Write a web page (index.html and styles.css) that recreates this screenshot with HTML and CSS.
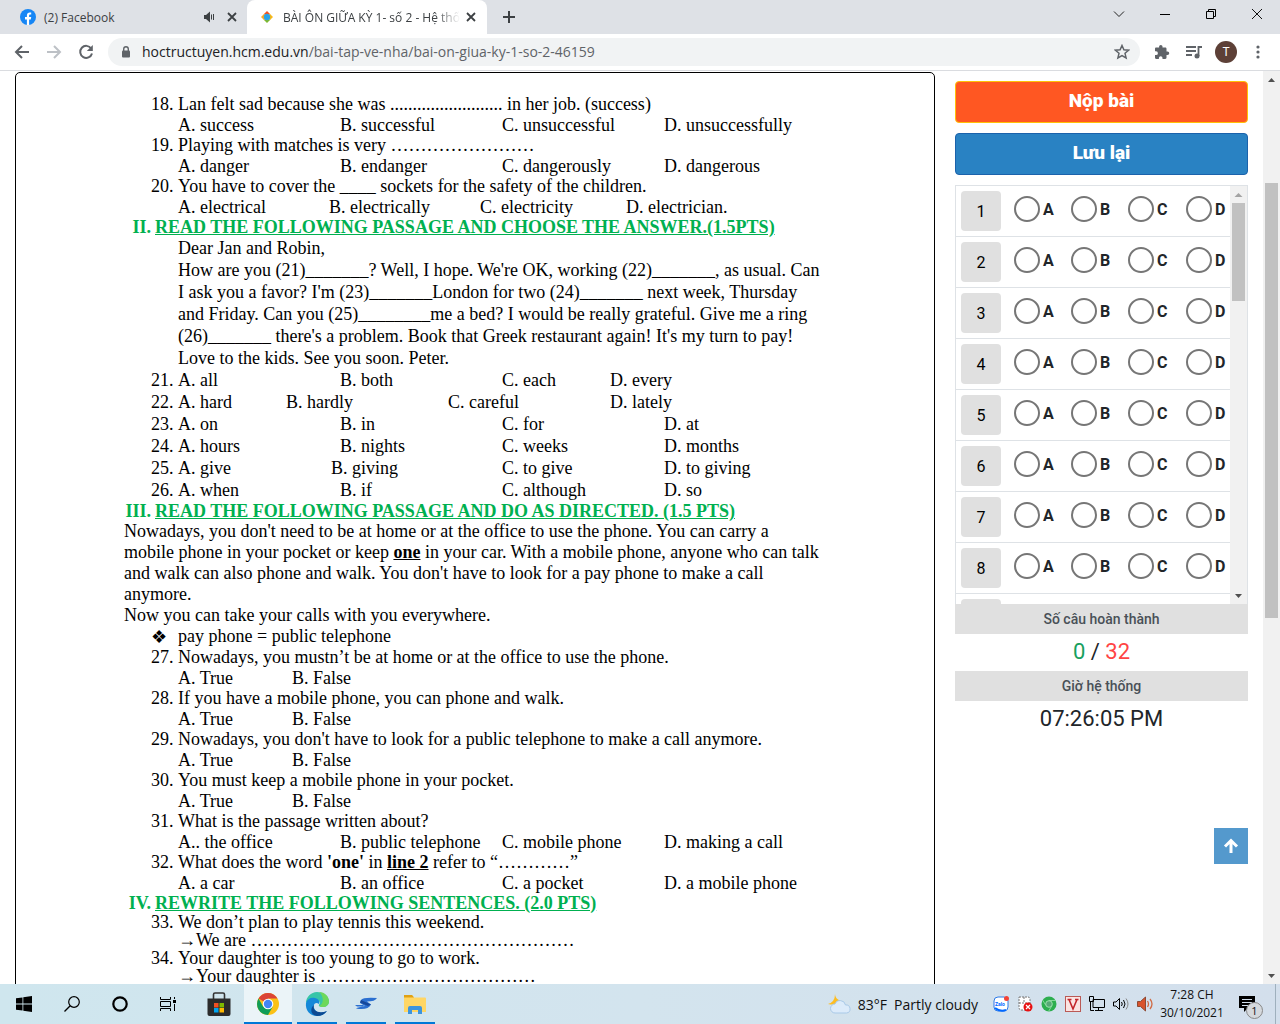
FILE: index.html
```html
<!DOCTYPE html>
<html lang="vi">
<head>
<meta charset="utf-8">
<title>BÀI ÔN GIỮA KỲ 1- số 2</title>
<link rel="stylesheet" href="styles.css">
</head>
<body>
<div class="screen">
  <header class="tabstrip">
    <div class="tab tab-idle">
      <svg class="favicon" viewBox="0 0 16 16"><circle cx="8" cy="8" r="8" fill="#1686f5"/><path d="M6.9 16v-5.6H5V8.1h1.9V6.5c0-2 1.1-3 2.9-3 .8 0 1.4.1 1.4.1v2h-.9c-.9 0-1.200.5-1.200 1.100v1.400h2.100l-.4 2.300H9.100V16z" fill="#fff"/></svg>
      <span class="tab-title">(2) Facebook</span>
      <svg class="tab-sound" viewBox="0 0 12 12"><path d="M1 4h2l4-3.500v11L3 8H1z" fill="#3c4043"/><path d="M8.500 3.500v5M10.500 3v6" stroke="#3c4043" fill="none"/></svg>
      <button class="tab-close" aria-label="Close tab"><svg viewBox="0 0 10 10"><path d="M1 1l8 8M9 1L1 9" stroke="#3c4043" stroke-width="1.800"/></svg></button>
    </div>
    <div class="tab tab-active">
      <svg class="favicon favicon-small" viewBox="0 0 12 12"><path d="M6 0l3.500 3.500H2.500z" fill="#f4511e"/><path d="M12 6L8.500 9.500v-7z" fill="#f9b817"/><path d="M6 12L2.500 8.500h7z" fill="#7cb82f"/><path d="M0 6l3.500-3.500v7z" fill="#f9a825"/><circle cx="6" cy="6" r="3.200" fill="#29a3e8"/></svg>
      <span class="tab-title tab-fade">BÀI ÔN GIỮA KỲ 1- số 2 - Hệ thố</span>
      <button class="tab-close" aria-label="Close tab"><svg viewBox="0 0 10 10"><path d="M1 1l8 8M9 1L1 9" stroke="#3c4043" stroke-width="1.800"/></svg></button>
    </div>
    <button class="new-tab" aria-label="New tab"><svg viewBox="0 0 12 12"><path d="M6 0v12M0 6h12" stroke="#3c4043" stroke-width="2"/></svg></button>
    <div class="window-buttons">
      <button aria-label="Search tabs"><svg viewBox="0 0 12 12"><path d="M1 3.500l5 5 5-5" fill="none" stroke="#222"/></svg></button>
      <button aria-label="Minimize"><svg viewBox="0 0 12 12"><path d="M1 6.500h10" stroke="#000"/></svg></button>
      <button aria-label="Restore"><svg viewBox="0 0 12 12"><path d="M1.500 3.500h7v7h-7zM3.500 3.500v-2h7v7h-2" fill="none" stroke="#000"/></svg></button>
      <button aria-label="Close"><svg viewBox="0 0 12 12"><path d="M1 1l10 10M11 1L1 11" stroke="#111"/></svg></button>
    </div>
  </header>
  <div class="toolbar">
    <button class="nav" aria-label="Back"><svg viewBox="0 0 16 16"><path d="M15 8H2M8 2L2 8l6 6" fill="none" stroke="#5f6368" stroke-width="2"/></svg></button>
    <button class="nav" aria-label="Forward"><svg viewBox="0 0 16 16"><path d="M1 8h13M8 2l6 6-6 6" fill="none" stroke="#bdc1c6" stroke-width="2"/></svg></button>
    <button class="nav" aria-label="Reload"><svg viewBox="0 0 16 16"><path d="M13.200 4.500A6 6 0 1 0 14 9.500" fill="none" stroke="#5f6368" stroke-width="2"/><path d="M14.800 1v6h-6z" fill="#5f6368"/></svg></button>
    <div class="address">
      <svg class="lock" viewBox="0 0 10 12"><rect x="1" y="4.500" width="8" height="7" rx="1" fill="#5f6368"/><path d="M2.700 5V3a2.300 2.300 0 0 1 4.600 0v2" fill="none" stroke="#5f6368" stroke-width="1.400"/></svg>
      <span class="url"><b>hoctructuyen.hcm.edu.vn</b>/bai-tap-ve-nha/bai-on-giua-ky-1-so-2-46159</span>
      <svg class="star" viewBox="0 0 16 16"><path d="M8 1.500l1.900 4.300 4.700.4-3.600 3.100 1.100 4.600L8 11.500l-4.100 2.400L5 9.300 1.400 6.200l4.700-.4z" fill="none" stroke="#5f6368" stroke-width="1.500"/></svg>
    </div>
    <svg class="ext" viewBox="0 0 16 16"><path d="M13.500 7.500h-1V4.700c0-.8-.6-1.200-1.200-1.200H8.500V2.600a1.700 1.700 0 0 0-3.400 0v.9H2.200C1.500 3.500 1 4 1 4.700v2.600h1a1.900 1.900 0 0 1 0 3.800H1v2.700c0 .7.5 1.200 1.200 1.200h2.700v-1a1.800 1.800 0 0 1 3.600 0v1h2.800c.6 0 1.200-.5 1.200-1.200V11h1a1.750 1.750 0 0 0 0-3.500z" fill="#5f6368"/></svg>
    <svg class="media" viewBox="0 0 16 16"><path d="M0 3h10M0 7h10M0 11h6M12.500 12V3H16" fill="none" stroke="#5f6368" stroke-width="1.800"/><circle cx="11" cy="12" r="2.500" fill="#5f6368"/></svg>
    <span class="avatar">T</span>
    <svg class="menu" viewBox="0 0 4 14"><circle cx="2" cy="2" r="1.600" fill="#5f6368"/><circle cx="2" cy="7" r="1.600" fill="#5f6368"/><circle cx="2" cy="12" r="1.600" fill="#5f6368"/></svg>
  </div>

  <div class="viewport">
    <main class="page">
      <article class="paper">
        <section class="block">
          <div class="item"><span>18.</span><p>Lan felt sad because she was ......................... in her job. (success)</p></div>
          <div class="options"><span>A. success</span><span>B. successful</span><span>C. unsuccessful</span><span>D. unsuccessfully</span></div>
          <div class="item"><span>19.</span><p>Playing with matches is very ……………………</p></div>
          <div class="options"><span>A. danger</span><span>B. endanger</span><span>C. dangerously</span><span>D. dangerous</span></div>
          <div class="item"><span>20.</span><p>You have to cover the ____ sockets for the safety of the children.</p></div>
          <div class="options tight"><span>A. electrical</span><span>B. electrically</span><span>C. electricity</span><span>D. electrician.</span></div>
        </section>
        <h2><span>II.</span><u>READ THE FOLLOWING PASSAGE AND CHOOSE THE ANSWER.(1.5PTS)</u></h2>
        <section class="block roomy">
          <p class="letter">Dear Jan and Robin,<br>How are you (21)_______? Well, I hope. We're OK, working (22)_______, as usual. Can<br>I ask you a favor? I'm (23)_______London for two (24)_______ next week, Thursday<br>and Friday. Can you (25)________me a bed? I would be really grateful. Give me a ring<br>(26)_______ there's a problem. Book that Greek restaurant again! It's my turn to pay!<br>Love to the kids. See you soon. Peter.</p>
          <div class="item"><span>21.</span><div class="choices near-d"><span>A. all</span><span>B. both</span><span>C. each</span><span>D. every</span></div></div>
          <div class="item"><span>22.</span><div class="choices near-b"><span>A. hard</span><span>B. hardly</span><span>C. careful</span><span>D. lately</span></div></div>
          <div class="item"><span>23.</span><div class="choices"><span>A. on</span><span>B. in</span><span>C. for</span><span>D. at</span></div></div>
          <div class="item"><span>24.</span><div class="choices"><span>A. hours</span><span>B. nights</span><span>C. weeks</span><span>D. months</span></div></div>
          <div class="item"><span>25.</span><div class="choices early-b"><span>A. give</span><span>B. giving</span><span>C. to give</span><span>D. to giving</span></div></div>
          <div class="item"><span>26.</span><div class="choices"><span>A. when</span><span>B. if</span><span>C. although</span><span>D. so</span></div></div>
        </section>
        <h2><span>III.</span><u>READ THE FOLLOWING PASSAGE AND DO AS DIRECTED. (1.5 PTS)</u></h2>
        <section class="block">
          <p class="passage">Nowadays, you don't need to be at home or at the office to use the phone. You can carry a<br>mobile phone in your pocket or keep <b><u>one</u></b> in your car. With a mobile phone, anyone who can talk<br>and walk can also phone and walk. You don't have to look for a pay phone to make a call<br>anymore.<br>Now you can take your calls with you everywhere.</p>
          <div class="item"><span class="bullet">❖</span><p>pay phone = public telephone</p></div>
          <div class="item"><span>27.</span><p>Nowadays, you mustn’t be at home or at the office to use the phone.</p></div>
          <div class="options pair"><span>A. True</span><span>B. False</span></div>
          <div class="item"><span>28.</span><p>If you have a mobile phone, you can phone and walk.</p></div>
          <div class="options pair"><span>A. True</span><span>B. False</span></div>
          <div class="item"><span>29.</span><p>Nowadays, you don't have to look for a public telephone to make a call anymore.</p></div>
          <div class="options pair"><span>A. True</span><span>B. False</span></div>
          <div class="item"><span>30.</span><p>You must keep a mobile phone in your pocket.</p></div>
          <div class="options pair"><span>A. True</span><span>B. False</span></div>
          <div class="item"><span>31.</span><p>What is the passage written about?</p></div>
          <div class="options"><span>A.. the office</span><span>B. public telephone</span><span>C. mobile phone</span><span>D. making a call</span></div>
          <div class="item"><span>32.</span><p>What does the word <b>'one'</b> in <b><u>line 2</u></b> refer to “…………”</p></div>
          <div class="options"><span>A. a car</span><span>B. an office</span><span>C. a pocket</span><span>D. a mobile phone</span></div>
        </section>
        <h2><span>IV.</span><u>REWRITE THE FOLLOWING SENTENCES. (2.0 PTS)</u></h2>
        <section class="block dense">
          <div class="item"><span>33.</span><p>We don’t plan to play tennis this weekend.<br><span class="arrow">→</span>We are ………………………………………………</p></div>
          <div class="item"><span>34.</span><p>Your daughter is too young to go to work.<br><span class="arrow">→</span>Your daughter is ………………………………</p></div>
        </section>
      </article>

      <aside class="panel">
        <button class="action submit">Nộp bài</button>
        <button class="action save">Lưu lại</button>
        <div class="answers">
          <div class="answer-list">
            <div class="row"><button>1</button><label><input type="radio" name="q1">A</label><label><input type="radio" name="q1">B</label><label><input type="radio" name="q1">C</label><label><input type="radio" name="q1">D</label></div>
            <div class="row"><button>2</button><label><input type="radio" name="q2">A</label><label><input type="radio" name="q2">B</label><label><input type="radio" name="q2">C</label><label><input type="radio" name="q2">D</label></div>
            <div class="row"><button>3</button><label><input type="radio" name="q3">A</label><label><input type="radio" name="q3">B</label><label><input type="radio" name="q3">C</label><label><input type="radio" name="q3">D</label></div>
            <div class="row"><button>4</button><label><input type="radio" name="q4">A</label><label><input type="radio" name="q4">B</label><label><input type="radio" name="q4">C</label><label><input type="radio" name="q4">D</label></div>
            <div class="row"><button>5</button><label><input type="radio" name="q5">A</label><label><input type="radio" name="q5">B</label><label><input type="radio" name="q5">C</label><label><input type="radio" name="q5">D</label></div>
            <div class="row"><button>6</button><label><input type="radio" name="q6">A</label><label><input type="radio" name="q6">B</label><label><input type="radio" name="q6">C</label><label><input type="radio" name="q6">D</label></div>
            <div class="row"><button>7</button><label><input type="radio" name="q7">A</label><label><input type="radio" name="q7">B</label><label><input type="radio" name="q7">C</label><label><input type="radio" name="q7">D</label></div>
            <div class="row"><button>8</button><label><input type="radio" name="q8">A</label><label><input type="radio" name="q8">B</label><label><input type="radio" name="q8">C</label><label><input type="radio" name="q8">D</label></div>
            <div class="row"><button aria-label="9"></button><label><input type="radio" name="q9" aria-label="A"></label><label><input type="radio" name="q9" aria-label="B"></label><label><input type="radio" name="q9" aria-label="C"></label><label><input type="radio" name="q9" aria-label="D"></label></div>
          </div>
          <div class="scrollbar">
            <svg viewBox="0 0 17 17"><path d="M4.500 11h8l-4-4z" fill="#a3a3a3"/></svg>
            <div class="scroll-track"><div class="scroll-thumb thumb-list"></div></div>
            <svg viewBox="0 0 17 17"><path d="M5 7h7l-3.500 4z" fill="#505050"/></svg>
          </div>
        </div>
        <h3>Số câu hoàn thành</h3>
        <p class="figure"><span class="done">0</span> / <span class="total">32</span></p>
        <h3>Giờ hệ thống</h3>
        <p class="figure">07:26:05 PM</p>
      </aside>
      <button class="to-top" aria-label="Top"><svg viewBox="0 0 16 16"><path d="M8 15V3M2 8.500L8 2.500l6 6" fill="none" stroke="#fff" stroke-width="3"/></svg></button>
    </main>
    <div class="scrollbar">
      <svg viewBox="0 0 17 17"><path d="M5 11h7l-3.500-4z" fill="#505050"/></svg>
      <div class="scroll-track"><div class="scroll-thumb thumb-page"></div></div>
      <svg viewBox="0 0 17 17"><path d="M5 7h7l-3.500 4z" fill="#505050"/></svg>
    </div>
  </div>

  <footer class="taskbar">
    <button class="task" aria-label="Start"><svg viewBox="0 0 16 16"><path d="M0 2.300L6.500 1.400v6.200H0zM7.300 1.300L16 0v7.600H7.300zM0 8.400h6.500v6.200L0 13.700zM7.300 8.400H16V16l-8.700-1.300z" fill="#000"/></svg></button>
    <button class="task" aria-label="Search"><svg viewBox="0 0 16 16"><circle cx="10" cy="6" r="5.300" fill="none" stroke="#000" stroke-width="1.200"/><path d="M6.200 9.800L.5 15.500" stroke="#000" stroke-width="1.300"/></svg></button>
    <button class="task" aria-label="Cortana"><svg viewBox="0 0 16 16"><circle cx="8" cy="8" r="6.700" fill="none" stroke="#000" stroke-width="2.200"/></svg></button>
    <button class="task" aria-label="Task view"><svg viewBox="0 0 16 16"><path d="M.5 1v2.500h10V1M.5 15v-2.500h10V15M.5 5.500h10v5H.5zM14.500 1v2M14.500 8v7" fill="none" stroke="#000"/><path d="M13 4h3v3h-3z"/></svg></button>
    <div class="pinned">
      <button class="task" aria-label="Store"><svg class="big" viewBox="0 0 24 24"><path d="M6.500 7V2.500Q6.500 1 8 1h8q1.500 0 1.500 1.500V7" fill="none" stroke="#333" stroke-width="1.600"/><path d="M.5 6.500h23V22q0 2-2 2h-19q-2 0-2-2z" fill="#2b2b2b"/><path d="M7 11h4.500v4.500H7z" fill="#f25022"/><path d="M12.500 11H17v4.500h-4.500z" fill="#7fba00"/><path d="M7 16h4.500v4.500H7z" fill="#00a4ef"/><path d="M12.500 16H17v4.500h-4.500z" fill="#ffb900"/></svg></button>
      <button class="task open current" aria-label="Chrome"><svg class="big" viewBox="0 0 24 24"><circle cx="12" cy="12" r="11" fill="#fbc116"/><path d="M12 12L2.500 6.500A11 11 0 0 1 21.500 6.500H12z" fill="#db4437"/><path d="M2.500 6.500A11 11 0 0 0 12 23l4.700-8.300L12 12 7.200 14.700z" fill="#0f9d58"/><circle cx="12" cy="12" r="5.300" fill="#fff"/><circle cx="12" cy="12" r="4.200" fill="#4285f4"/></svg></button>
      <button class="task open" aria-label="Edge"><svg class="big" viewBox="0 0 24 24"><path d="M1 11C1 5 6 0 12 0s12 4 12 9.500c0 3.500-3 5.500-6 5.500-4 0-5-1.500-3.500-3S13 7 9 7c-4 0-8 4-8 4z" fill="#36c5a8"/><path d="M14 0c6 0 10 4.500 10 9.500 0 3.500-3 5.500-6 5.500-2 0-3-.5-3.800-1C20 11 18 3 14 0z" fill="#6dd85a"/><path d="M1 11c1-4 5-6 9-5 4 .7 5 4 4 6-4-3-6 1-5 4 1.500 5 8 6 13 3-2 3-6 5-10 5C5 24 0 18 1 11z" fill="#1488d8"/><path d="M9 13c-2 6 5 9 13 6-2 3-6 5-10 5-7-1-7-8-3-11z" fill="#0c4a92"/></svg></button>
      <button class="task open" aria-label="App"><svg class="big" viewBox="0 0 24 24"><path d="M7 8q2-3 16-2-2 3.500-10 3.500l4 3q-3 6-15 4 2-1.500 9-2.500L6 11z" fill="#2b6fd0"/><path d="M7 8l10 4.500-3 1.500-8-3.500z" fill="#16479a"/><path d="M1 13h9l-1 1.500H3z" fill="#2b6fd0"/></svg></button>
      <button class="task open" aria-label="Explorer"><svg class="big" viewBox="0 0 24 24"><path d="M1 4q0-1 1-1h7l2 2.500h11q1 0 1 1V20H1z" fill="#ffd664"/><path d="M1 3h8l2 2.500H1z" fill="#e0a114"/><path d="M5 22v-6q0-2 2-2h10q2 0 2 2v6h-4v-4H9v4z" fill="#3d94dc"/></svg></button>
    </div>
    <div class="tray">
      <div class="weather"><svg viewBox="0 0 24 20"><path d="M8 0q0 5 6 7-4 5-13 3 7-2 7-10z" fill="#fdbd22"/><path d="M8 19a4.500 4.500 0 0 1 0-9 5.500 5.500 0 0 1 10.500 1 4 4 0 0 1 1 8z" fill="#dcebfa" stroke="#a9c9e8"/></svg><span>83°F</span><span>Partly cloudy</span></div>
      <div class="tray-icons">
        <svg viewBox="0 0 16 16"><rect x="1" y="1" width="14" height="14" rx="4" fill="#fff" stroke="#2d7be8"/><path d="M2 12q5 4 11 2" stroke="#0068ff" stroke-width="2" fill="none"/><text x="2" y="10" class="zalo">Zalo</text><circle cx="13.500" cy="2.500" r="2.500" fill="#f44336"/></svg>
        <svg viewBox="0 0 16 16"><path d="M2 1h9q2 0 2 3v10H4q-2 0-2-3zM2 7h11M7 1v6" fill="#fff" stroke="#777" stroke-dasharray="2 1"/><circle cx="11" cy="11" r="4.500" fill="#e81111"/><path d="M9 9l4 4M13 9l-4 4" stroke="#fff" stroke-width="1.200"/></svg>
        <svg viewBox="0 0 16 16"><circle cx="8" cy="8" r="7.500" fill="#2eae4f"/><path d="M8 4.500h7M5 9.500L1.500 4M11 9.500L7.500 15.500" stroke="#87d89a"/><circle cx="8" cy="8" r="3.300" fill="#58a876" stroke="#9be2ac"/></svg>
        <svg viewBox="0 0 16 16"><rect x=".5" y=".5" width="15" height="15" fill="#fbe4e2" stroke="#ba5a56"/><path d="M4 3.500L8 13l4-9.500M2.500 3.500h4M10 3.500h3.500" fill="none" stroke="#c3262b" stroke-width="1.600"/></svg>
        <svg viewBox="0 0 16 16"><path d="M4 3.500h11.500v8H4zM9.500 12v3M6 14.500h8M1.500 6v8.500H5M.5.500h4v5h-4z" fill="none" stroke="#000"/></svg>
        <svg viewBox="0 0 16 16"><path d="M.5 6h2.500l3.500-3.500v11L3 10H.500zM8.500 6q1.500 2 0 4M10.500 4q3 4 0 8" fill="none" stroke="#000"/><path d="M13 2.500q4 5.500 0 11" fill="none" stroke="#888"/></svg>
        <svg viewBox="0 0 16 16"><path d="M.5 5.500h3l5-4.500v14l-5-4.500h-3z" fill="#d9532c" stroke="#8d4a35"/><path d="M10.500 5q2 3 0 6M13 3q4 5 0 10" fill="none" stroke="#d06b45" stroke-width="1.300"/></svg>
      </div>
      <div class="clock"><span>7:28 CH</span><span>30/10/2021</span></div>
      <div class="notice"><svg viewBox="0 0 16 16"><path d="M0 0h16v12h-7l-4 4v-4H0z"/><path d="M3 3.500h10M3 6.500h10M3 9.500h7" stroke="#d3dfec"/></svg><span class="count">1</span></div>
      <div class="desktop-edge"></div>
    </div>
  </footer>
</div>
</body>
</html>
```
FILE: styles.css
```css
* { box-sizing: border-box; }
body { margin: 0; background: #fff; color: #000; }
button { border: 0; padding: 0; background: none; font: inherit; color: inherit; }
p, h2, h3 { margin: 0; }
svg { display: block; flex: none; }

.screen { display: flex; flex-direction: column; height: 100vh; overflow: hidden; font-family: "Open Sans", "Noto Sans", sans-serif; }

/* browser frame */
.tabstrip { display: flex; flex: none; height: 34px; background: #dee1e6; }
.tab { display: flex; align-items: center; font-size: 12px; color: #3c4043; }
.tab-idle { width: 247px; padding: 0 10px 0 20px; gap: 8px; }
.tab-active { width: 240px; padding: 0 11px 0 14px; gap: 10px; background: #fff; border-radius: 8px 8px 0 0; }
.tab-active .tab-close { margin-left: -4px; }
.favicon { width: 16px; height: 16px; }
.favicon-small { width: 12px; height: 12px; }
.tab-title { flex: 1; white-space: nowrap; }
.tab-fade { mask-image: linear-gradient(90deg, #000 86%, transparent); }
.tab-sound { width: 12px; height: 12px; }
.tab-close { width: 10px; margin: 0 0 0 4px; }
.tab-close svg { width: 10px; height: 10px; }
.new-tab { width: 44px; display: grid; place-items: center; }
.new-tab svg { width: 12px; height: 12px; }
.window-buttons { display: flex; margin-left: auto; }
.window-buttons button { width: 46px; height: 28px; display: grid; place-items: center; }
.window-buttons svg { width: 12px; height: 12px; }

.toolbar { display: flex; flex: none; align-items: center; height: 37px; padding: 0 20px 0 14px; border-bottom: 1px solid #dadce0; background: #fff; }
.nav { width: 32px; }
.nav svg { width: 16px; height: 16px; }
.address { display: flex; flex: 1; align-items: center; height: 28px; margin: 0 14px 0 -2px; padding: 0 10px 0 13px; border-radius: 14px; background: #f1f3f4; }
.lock { width: 10px; height: 12px; }
.url { flex: 1; margin-left: 11px; font-size: 14px; line-height: 18px; color: #5f6368; white-space: nowrap; }
.url b { font-weight: 400; color: #202124; }
.star { width: 16px; height: 16px; }
.ext { width: 16px; height: 16px; margin-right: 16px; }
.media { width: 16px; height: 16px; margin-right: 13px; }
.avatar { width: 22px; height: 22px; margin-right: 19px; border-radius: 50%; background: #5d4037; color: #fff; font: 12px/22px Roboto, sans-serif; text-align: center; }
.menu { width: 4px; height: 14px; }

.viewport { display: flex; flex: 1; min-height: 0; }
.page { position: relative; display: flex; flex: 1; align-items: flex-start; gap: 20px; padding: 1px 15px 0; overflow: hidden; }

/* exam paper */
.paper { flex: 1; padding: 21px 0 40px 108px; border: 1px solid #000; border-radius: 5px; font: 18px/21px "Liberation Serif", serif; white-space: nowrap; }
.item { display: grid; grid-template-columns: 27px 1fr; padding-left: 27px; }
.options { line-height: 20px; margin-left: 54px; }
.options, .choices { display: grid; grid-template-columns: 162px 162px 162px auto; }
.options.tight { grid-template-columns: 151px 151px 146px auto; }
.options.pair { grid-template-columns: 114px auto; }
.choices.near-d { grid-template-columns: 162px 162px 108px auto; }
.choices.near-b { grid-template-columns: 108px 162px 162px auto; }
.choices.early-b { grid-template-columns: 153px 171px 162px auto; }
.roomy { line-height: 22px; }
.dense { line-height: 18px; }
.letter { padding-left: 54px; }
.bullet { font-family: "DejaVu Sans", sans-serif; }
.arrow { font-family: "Liberation Serif", serif; }
.paper h2 { display: grid; grid-template-columns: 27px auto; gap: 4px; font: inherit; font-weight: 700; line-height: 20px; color: #00b050; }
.paper h2 span { text-align: right; }

/* answer panel */
.panel { width: 293px; padding-top: 9px; font-family: Roboto, sans-serif; color: #212529; }
.action { display: block; width: 100%; height: 42px; margin-bottom: 10px; border: 1px solid; border-radius: 4px; font-size: 19px; line-height: 38px; padding-bottom: 2px; font-weight: 900; color: #fff; }
.submit { background: #ff5722; border-color: #ffc107; }
.save { background: #2982c3; border-color: #1b62ab; }
.answers { display: flex; height: 419px; border: 1px solid #dee2e6; border-bottom: 0; }
.answer-list { flex: 1; overflow: hidden; }
.row { display: grid; grid-template-columns: 53px 57px 57px 58px auto; height: 51px; padding: 5px 0 5px 5px; border-bottom: 1px solid #dee2e6; }
.row button { width: 40px; height: 40px; border-radius: 4px; background: #e0e0e0; font-size: 16px; color: #000; }
.row label { display: flex; align-items: center; gap: 3px; height: 36px; font-size: 16px; font-weight: 700; }
.row input { appearance: none; flex: none; width: 26px; height: 26px; margin: 0; border: 2px solid #767676; border-radius: 50%; background: #fff; }
.panel h3 { height: 30px; background: #e0e0e0; font-size: 14px; line-height: 30px; font-weight: 500; text-align: center; color: #495057; }
.figure { font-size: 22px; line-height: 36px; height: 37px; text-align: center; }
.done { color: #18a05e; }
.total { color: #ff4444; }
.to-top { position: absolute; right: 15px; bottom: 120px; width: 34px; height: 36px; display: grid; place-items: center; background: #5499cd; }
.to-top svg { width: 16px; height: 16px; }

.scrollbar { display: flex; flex-direction: column; width: 17px; background: #f1f1f1; }
.scrollbar svg { width: 17px; height: 17px; }
.scroll-track { flex: 1; padding: 0 2px; }
.scroll-thumb { background: #c1c1c1; }
.thumb-list { height: 98px; }
.thumb-page { height: 435px; margin-top: 95px; }

/* taskbar */
.taskbar { display: flex; flex: none; height: 40px; background: linear-gradient(90deg, #cfe6ee, #d3e4ee 50%, #d3dfec); color: #111; }
.task { width: 48px; height: 40px; display: grid; place-items: center; }
.task svg { width: 16px; height: 16px; }
.task svg.big { width: 24px; height: 24px; }
.pinned { display: flex; gap: 1px; margin-left: 3px; }
.open { background: linear-gradient(#0078d7, #0078d7) center bottom / 40px 2px no-repeat; }
.open.current { background: linear-gradient(#0078d7, #0078d7) center bottom / 48px 2px no-repeat #ebf4f8; }
.tray { display: flex; align-items: center; margin-left: auto; }
.weather { display: flex; align-items: center; gap: 7px; font-size: 14px; margin-right: 15px; }
.weather svg { width: 24px; height: 20px; }
.tray-icons { display: flex; gap: 8px; }
.tray-icons svg { width: 16px; height: 16px; }
.zalo { font: bold 5px Roboto, sans-serif; fill: #0068ff; }
.clock { display: flex; flex-direction: column; width: 78px; font-size: 12px; line-height: 18px; text-align: center; }
.notice { position: relative; width: 44px; padding-left: 8px; }
.notice svg { width: 16px; height: 16px; }
.count { position: absolute; left: 15px; top: 6px; width: 17px; height: 17px; border: 1px solid #888; border-radius: 50%; background: #d5d9dd; font-size: 11px; line-height: 15px; text-align: center; }
.desktop-edge { width: 5px; height: 40px; border-left: 1px solid #9fb0bd; }
```
